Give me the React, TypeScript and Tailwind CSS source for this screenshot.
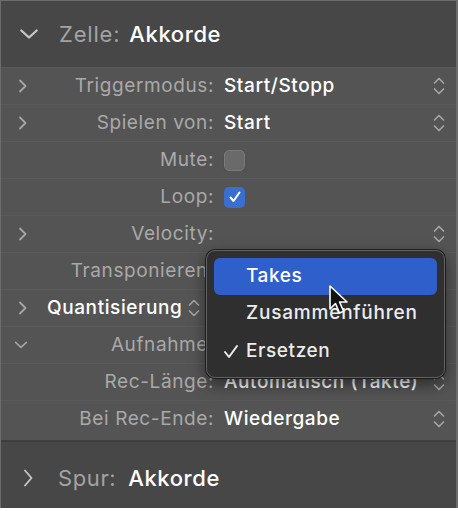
import React from 'react';

const font = { fontFamily: 'Inter, "Liberation Sans", Arial, sans-serif' };

const ChevronRight = () => (
  <svg width="10" height="14" viewBox="0 0 10 14" fill="none">
    <path d="M2 1.5 L7.5 7 L2 12.5" stroke="#a6a6a6" strokeWidth="1.8" strokeLinecap="round" strokeLinejoin="round" />
  </svg>
);

const ChevronDown = ({ size = 14, color = '#a6a6a6' }: { size?: number; color?: string }) => (
  <svg width={size} height={size * 0.7} viewBox="0 0 14 10" fill="none">
    <path d="M1.5 2.5 L7 7.5 L12.5 2.5" stroke={color} strokeWidth="1.6" strokeLinecap="round" strokeLinejoin="round" />
  </svg>
);

const Stepper = () => (
  <svg width="14" height="24" viewBox="0 0 14 24" fill="none">
    <path d="M2.5 9 L7 4.5 L11.5 9" stroke="#a4a4a4" strokeWidth="1.7" strokeLinecap="round" strokeLinejoin="round" />
    <path d="M2.5 15 L7 19.5 L11.5 15" stroke="#a4a4a4" strokeWidth="1.7" strokeLinecap="round" strokeLinejoin="round" />
  </svg>
);

type RowProps = {
  chevron?: 'right' | 'down';
  label: string;
  value?: string;
  stepper?: boolean;
  children?: React.ReactNode;
};

const Row = ({ chevron, label, value, stepper, children }: RowProps) => (
  <div className="h-[37px] flex items-center border-t border-[#5a5a5a]">
    <div className={`w-[44px] flex items-center ${chevron === 'down' ? 'pl-[13px]' : 'pl-[17px]'}`}>
      {chevron === 'right' && <ChevronRight />}
      {chevron === 'down' && <ChevronDown />}
    </div>
    <div className="w-[169px] text-right text-[19px] tracking-[0.6px] text-[#a9a9a9] whitespace-nowrap">{label}</div>
    <div className="flex-1 pl-[10px] text-[19px] tracking-[0.6px] text-white font-medium whitespace-nowrap overflow-hidden">
      {value}
      {children}
    </div>
    <div className="w-[24px] flex items-center">{stepper && <Stepper />}</div>
  </div>
);

const Cursor = () => (
  <svg width="24" height="32" viewBox="0 0 24 32" className="absolute left-[328px] top-[285px]">
    <path
      d="M2 1 L2 24 L7.5 18.5 L11.5 28 L15.5 26.3 L11.6 17 L19 17 Z"
      fill="#111"
      stroke="#fff"
      strokeWidth="1.6"
      strokeLinejoin="round"
    />
  </svg>
);

export default function App() {
  return (
    <div className="w-[458px] h-[511px] bg-white relative" style={font}>
      <div className="h-[508px] flex flex-col bg-[#535353] border-l border-t border-r-2 border-[#6c6c6c]">
        {/* Zelle header */}
        <div className="h-[66px] bg-[#474747] flex items-center">
          <div className="w-[58px] pl-[18px]">
            <ChevronDown size={20} color="#c8c8c8" />
          </div>
          <span className="text-[22px] tracking-[0.8px] text-[#a3a3a3]">Zelle:</span>
          <span className="text-[22px] tracking-[0.6px] text-white font-medium ml-[9px]">Akkorde</span>
        </div>

        {/* Parameter rows */}
        <div className="flex flex-col bg-[#545454] pb-[3px]">
          <Row chevron="right" label="Triggermodus:" value="Start/Stopp" stepper />
          <Row chevron="right" label="Spielen von:" value="Start" stepper />
          <Row label="Mute:">
            <div className="w-[21px] h-[21px] rounded-[5px] bg-[#6a6a6a] border border-[#7a7a7a] shadow-sm" />
          </Row>
          <Row label="Loop:">
            <div className="w-[21px] h-[21px] rounded-[5px] bg-[#3a6fcf] flex items-center justify-center">
              <svg width="14" height="14" viewBox="0 0 14 14" fill="none">
                <path d="M2.5 7.5 L5.5 11 L11.5 2.5" stroke="#fff" strokeWidth="2" strokeLinecap="round" strokeLinejoin="round" />
              </svg>
            </div>
          </Row>
          <Row chevron="right" label="Velocity:" stepper />
          <Row label="Transponieren:" stepper />
          <div className="h-[37px] flex items-center border-t border-[#5a5a5a]">
            <div className="w-[44px] pl-[17px] flex items-center">
              <ChevronRight />
            </div>
            <span className="text-[19px] tracking-[0.6px] text-white font-medium ml-[2px]">Quantisierung</span>
            <span className="ml-[5px] flex items-center"><Stepper /></span>
          </div>
          <Row chevron="down" label="Aufnahme:" stepper />
          <Row label="Rec-Länge:" value="Automatisch (Takte)" stepper />
          <Row label="Bei Rec-Ende:" value="Wiedergabe" stepper />
        </div>

        {/* Spur section */}
        <div className="flex-1 bg-[#474747] border-t-2 border-[#3e3e3e] flex items-center pt-[6px]">
          <div className="w-[57px] pl-[21px] flex items-center">
            <svg width="12" height="20" viewBox="0 0 12 20" fill="none">
              <path d="M3 2.5 L9.5 10 L3 17.5" stroke="#c8c8c8" strokeWidth="1.8" strokeLinecap="round" strokeLinejoin="round" />
            </svg>
          </div>
          <span className="text-[22px] tracking-[0.6px] text-[#a3a3a3]">Spur:</span>
          <span className="text-[22px] tracking-[0.6px] text-white font-medium ml-[12px]">Akkorde</span>
        </div>
      </div>

      {/* Popup menu */}
      <div className="absolute left-[206px] top-[250px] w-[239px] h-[128px] rounded-[9px] bg-[#2f2f2f] border border-[#626262] shadow-[0_0_0_1px_#1c1c1c,0_6px_16px_rgba(0,0,0,0.5)] p-[7px] flex flex-col">
        <div className="h-[37px] rounded-[6px] bg-[#2f5fca] flex items-center pl-[32px] text-[19px] tracking-[0.6px] text-white font-medium">
          Takes
        </div>
        <div className="h-[38px] flex items-center pl-[32px] text-[19px] tracking-[0.8px] text-[#ececec] font-medium">
          Zusammenführen
        </div>
        <div className="h-[38px] flex items-center text-[19px] tracking-[0.6px] text-[#ececec] font-medium">
          <span className="w-[32px] pl-[9px] flex items-center">
            <svg width="16" height="15" viewBox="0 0 16 15" fill="none">
              <path d="M2 8 L6 13 L14 2" stroke="#ececec" strokeWidth="2" strokeLinecap="round" strokeLinejoin="round" />
            </svg>
          </span>
          Ersetzen
        </div>
      </div>

      <Cursor />
    </div>
  );
}
